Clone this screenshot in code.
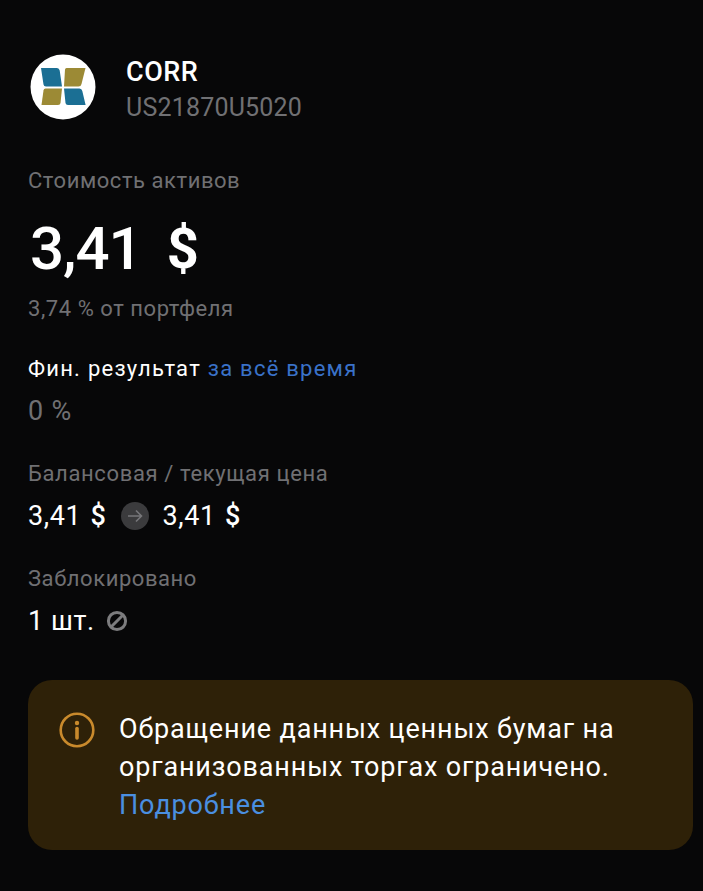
<div class="page">
  <header class="head">
    <div class="logo">
      <svg width="66" height="66" viewBox="0 0 66 66">
        <circle cx="33" cy="33" r="32.5" fill="#fff" />
        <path d="M11 14 H27 Q29.3 14 29.7 16.5 L32 32.5 H16 Q13.8 32.5 13.5 30.5 Z" fill="#1b6f94" />
        <path d="M36.5 14 H55.5 L51.5 30 Q51 32.5 48.5 32.5 H34 L35 15.5 Q35.2 14 36.5 14 Z" fill="#9c8a35" />
        <path d="M15.5 34.5 H32 L30.5 49 Q30.2 51 28 51 H11.5 L13.5 36.5 Q13.8 34.5 15.5 34.5 Z" fill="#9c8a35" />
        <path d="M34 34.5 H49.5 Q51.8 34.5 52.3 37 L55.6 51 H38 Q35.8 51 35.5 49 Z" fill="#1b6f94" />
      </svg>
    </div>
    <div class="ident">
      <div class="ticker">CORR</div>
      <div class="isin">US21870U5020</div>
    </div>
  </header>

  <div class="label first">Стоимость активов</div>
  <div class="value-big"><span class="digits">3,41</span><span class="cur-big">$</span></div>
  <div class="share">3,74 % от портфеля</div>

  <div class="fin">Фин. результат <span class="link">за всё время</span></div>
  <div class="zero">0 %</div>

  <div class="label bal">Балансовая / текущая цена</div>
  <div class="value price">
    <span>3,41 <b class="cur">$</b></span>
    <svg class="arrow" width="28" height="28" viewBox="0 0 28 28">
      <circle cx="14" cy="14" r="14" fill="#3b3b3d" />
      <path d="M7 14 H20.5 M15 8.5 L20.5 14 L15 19.5" fill="none" stroke="#77777a" stroke-width="1.6" />
    </svg>
    <span>3,41 <b class="cur">$</b></span>
  </div>

  <div class="label blocked">Заблокировано</div>
  <div class="value qty">
    <span>1 шт.</span>
    <svg width="22" height="22" viewBox="0 0 22 22">
      <circle cx="11" cy="11" r="8.6" fill="none" stroke="#7c7c7e" stroke-width="3" />
      <path d="M5.5 16.5 L16.5 5.5" stroke="#7c7c7e" stroke-width="3" />
    </svg>
  </div>

  <aside class="notice">
    <svg class="info" width="36" height="36" viewBox="0 0 36 36">
      <circle cx="18" cy="18" r="16.3" fill="none" stroke="#c98a2c" stroke-width="2.6" />
      <circle cx="18" cy="11" r="2.2" fill="#c98a2c" />
      <path d="M18 16.5 V26" stroke="#c98a2c" stroke-width="3.6" stroke-linecap="round" />
    </svg>
    <p>Обращение данных ценных бумаг на организованных торгах ограничено. <span class="more">Подробнее</span></p>
  </aside>
</div>

<style>
  :global(body) {
    margin: 0;
    background: #070708;
  }
  .page {
    box-sizing: border-box;
    width: 703px;
    height: 891px;
    padding: 54px 10px 0 28px;
    background: #070708;
    font-family: Roboto, "Noto Sans", sans-serif;
    color: #fff;
    overflow: hidden;
  }
  .head {
    display: flex;
    gap: 30px;
    align-items: flex-start;
    padding-left: 2px;
  }
  .logo {
    width: 66px;
    height: 66px;
  }
  .logo svg { display: block; }
  .ticker {
    font-size: 27px;
    line-height: 36px;
    font-weight: 500;
    letter-spacing: 0.5px;
  }
  .isin {
    font-size: 25px;
    line-height: 36px;
    color: #707073;
    letter-spacing: 0.2px;
  }
  .label {
    font-size: 22px;
    line-height: 30px;
    color: #707073;
    letter-spacing: 0.55px;
  }
  .first { margin-top: 40px; }
  .value-big {
    display: flex;
    gap: 25px;
    font-size: 60px;
    line-height: 70px;
    font-weight: 500;
    margin-top: 18px;
    margin-left: 2px;
  }
  .digits { letter-spacing: -1px; }
  .cur-big { font-weight: 700; font-size: 56px; }
  .cur { font-weight: 500; margin-left: 2px; }
  .share {
    font-size: 22px;
    line-height: 30px;
    color: #707073;
    margin-top: 10px;
    letter-spacing: 0.55px;
  }
  .fin {
    font-size: 22px;
    line-height: 30px;
    margin-top: 30px;
    letter-spacing: 1.25px;
  }
  .link { color: #3a72c8; }
  .zero {
    font-size: 27px;
    line-height: 36px;
    color: #707073;
    margin-top: 9px;
    letter-spacing: 0.8px;
  }
  .bal { margin-top: 30px; letter-spacing: 0.63px; }
  .value {
    font-size: 27px;
    line-height: 36px;
    letter-spacing: 0.6px;
    display: flex;
    align-items: center;
  }
  .price { margin-top: 9px; gap: 14px; }
  .blocked { margin-top: 30px; }
  .qty { margin-top: 9px; gap: 11px; }
  .notice {
    display: flex;
    gap: 24px;
    align-items: flex-start;
    margin-top: 41px;
    height: 170px;
    box-sizing: border-box;
    padding: 30px 30px 0 31px;
    background: #2e2108;
    border-radius: 24px;
  }
  .info { flex: none; margin-top: 2px; }
  .notice p {
    margin: 0;
    font-size: 27px;
    line-height: 38px;
    letter-spacing: 0.84px;
  }
  .more { display: block; color: #4a8fe0; }
</style>
